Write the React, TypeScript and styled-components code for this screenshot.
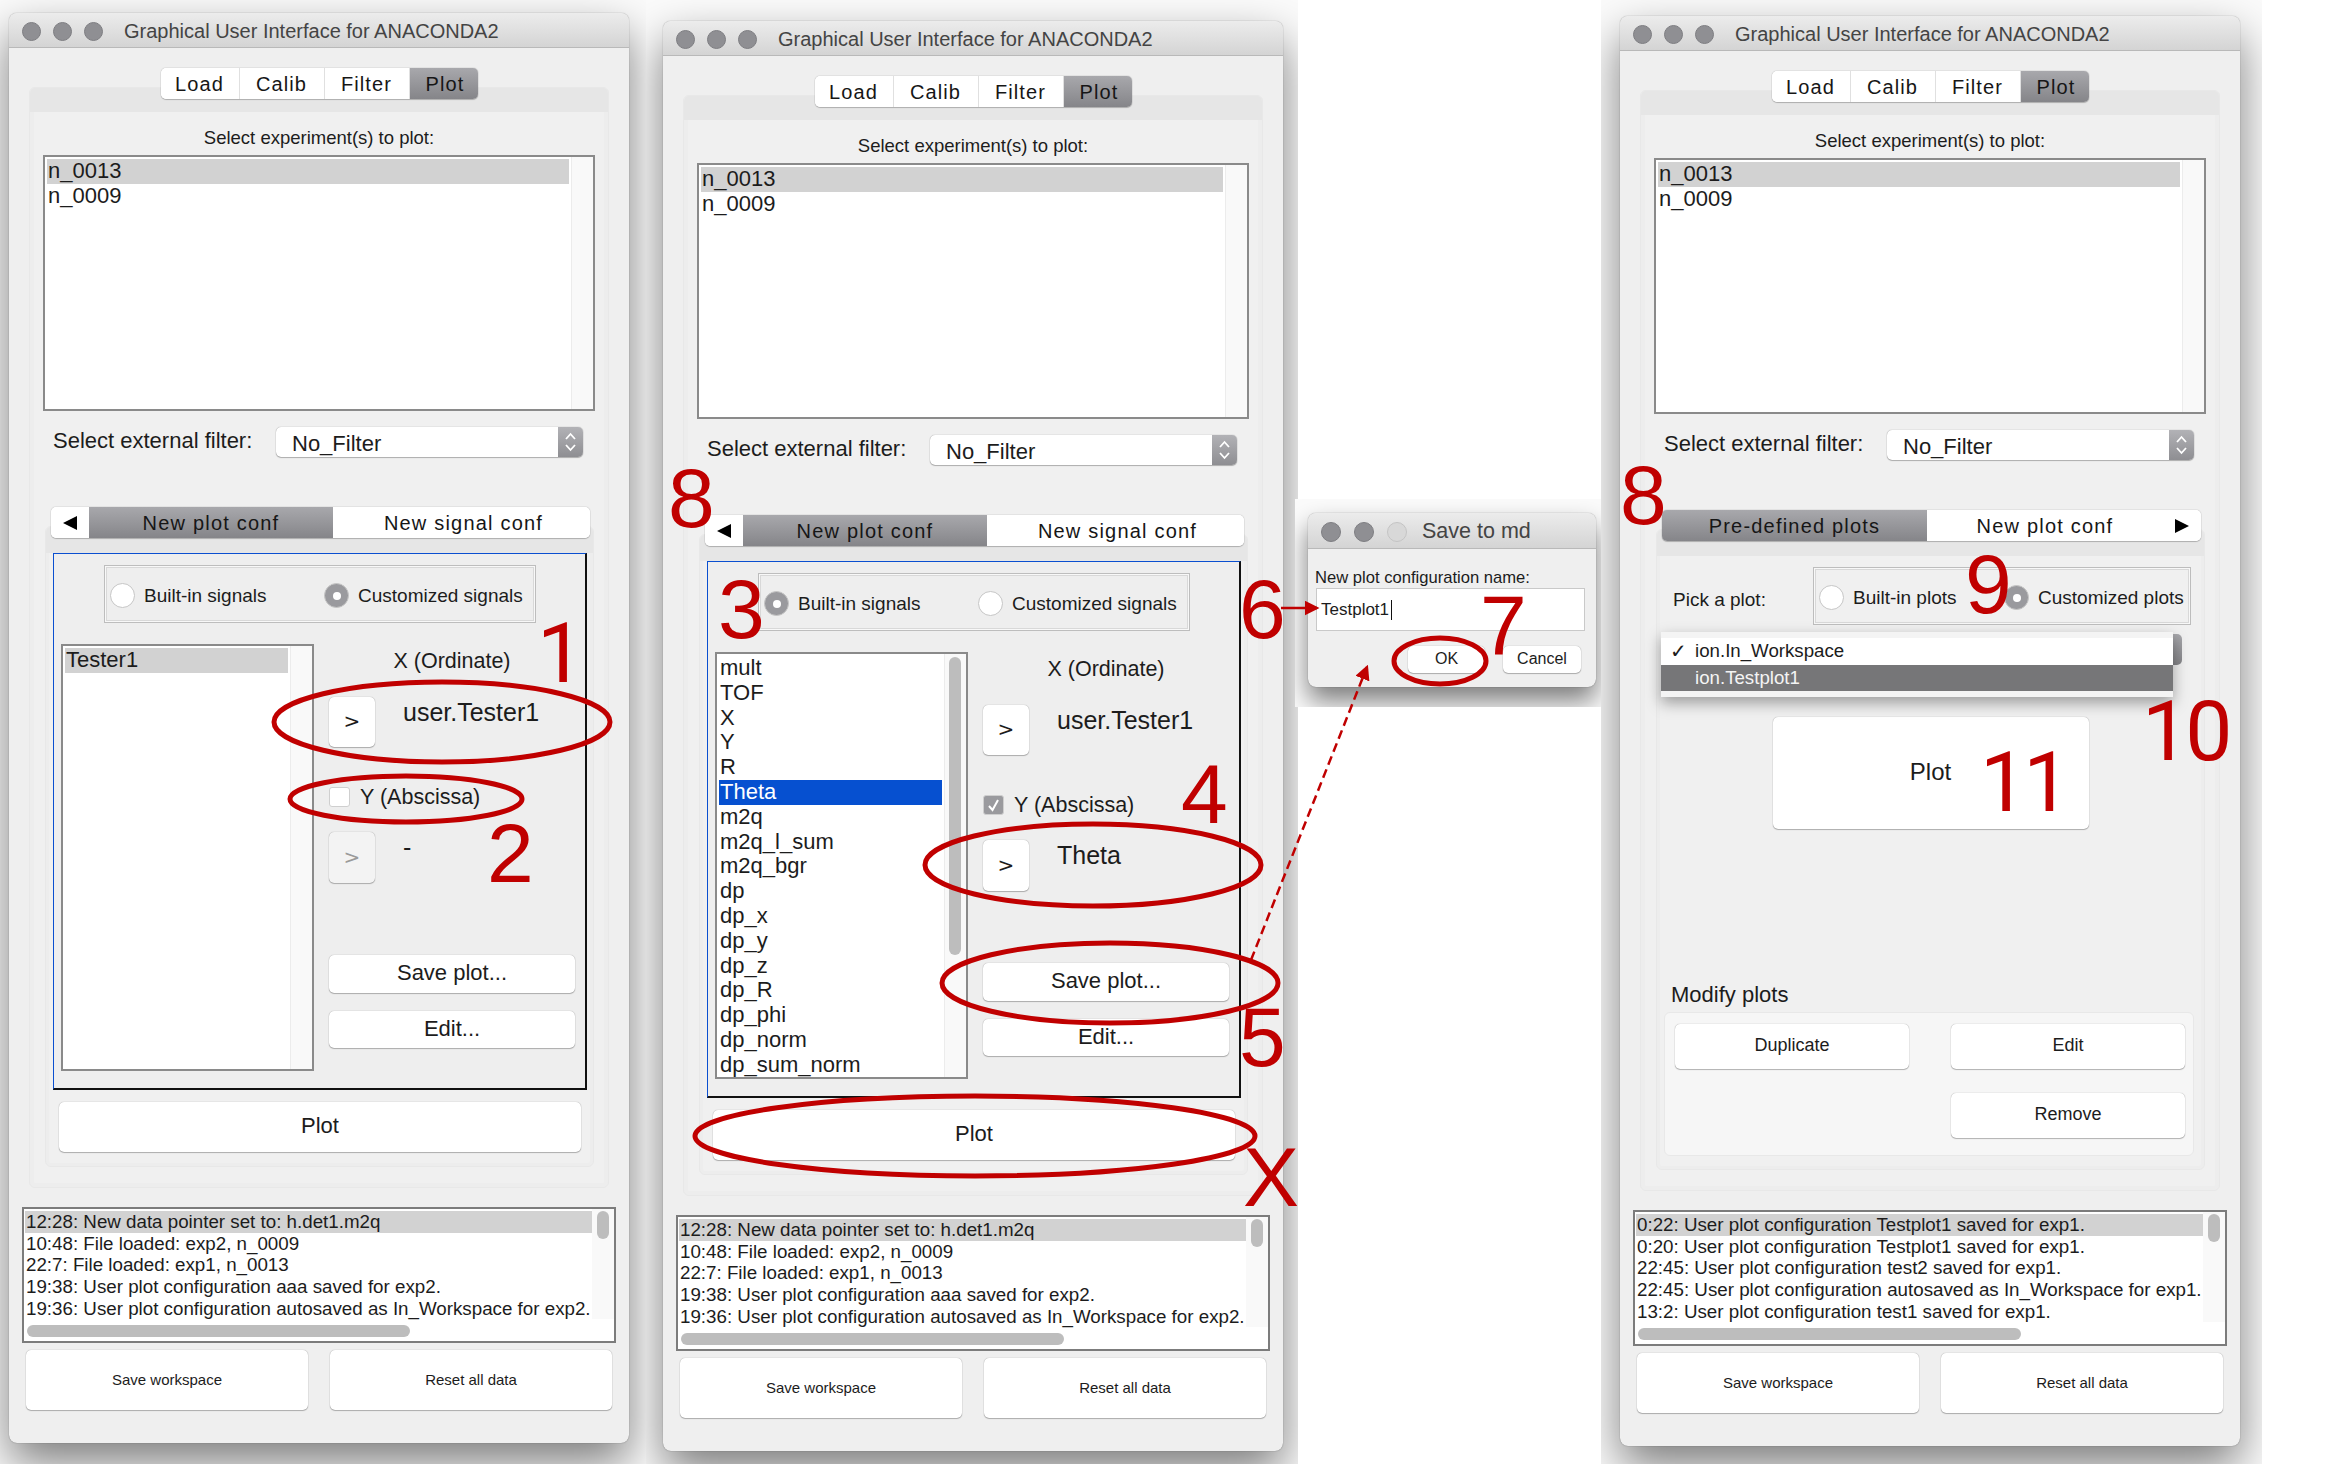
import React, { FC, ReactNode } from "react";
import styled, { createGlobalStyle } from "styled-components";

const GlobalStyle = createGlobalStyle`
  html, body {
    margin: 0;
    background: #fff;
    overflow: hidden;
  }
  body {
    font-family: "Liberation Sans", Arial, sans-serif;
    color: #1c1c1c;
  }
`;

const Canvas = styled.div`
  position: relative;
  width: 2335px;
  height: 1464px;
  overflow: hidden;
  background: #fff;
`;

// every screenshot was pasted in as its own crop, so the shadow stops at a hard edge
const Crop = styled.div<{ $x: number; $y: number; $w: number; $h: number; $z?: number }>`
  position: absolute;
  left: ${(p) => p.$x}px;
  top: ${(p) => p.$y}px;
  width: ${(p) => p.$w}px;
  height: ${(p) => p.$h}px;
  z-index: ${(p) => p.$z || 1};
  overflow: hidden;
  background: #fbfbfb;
`;

const Window = styled.div<{ $x: number; $y: number }>`
  position: absolute;
  left: ${(p) => p.$x}px;
  top: ${(p) => p.$y}px;
  width: 620px;
  height: 1430px;
  display: flex;
  flex-direction: column;
  background: #efefef;
  border-radius: 8px;
  box-shadow: 0 0 1px rgba(0, 0, 0, 0.55), 0 20px 46px rgba(0, 0, 0, 0.5);
`;

const TitleBar = styled.div`
  flex: none;
  height: 35px;
  box-sizing: border-box;
  padding: 2px 0 0 13px;
  display: flex;
  align-items: center;
  border-radius: 8px 8px 0 0;
  border-bottom: 1px solid #b9b9b9;
  background: linear-gradient(#ececec, #d4d4d4);
`;

const Light = styled.span<{ $off?: boolean }>`
  flex: none;
  width: 19px;
  height: 19px;
  margin-right: 12px;
  border-radius: 50%;
  box-sizing: border-box;
  background: ${(p) => (p.$off ? "#d8d8d8" : "#8f8f93")};
  border: 1px solid ${(p) => (p.$off ? "#c4c4c4" : "#7e7e82")};
`;

const TitleText = styled.span`
  margin-left: 9px;
  font-size: 20px;
  color: #444;
  white-space: nowrap;
`;

const MainTabs = styled.div`
  flex: none;
  align-self: center;
  position: relative;
  z-index: 2;
  margin-top: 20px;
  height: 31px;
  display: flex;
  border-radius: 5px;
  box-shadow: 0 0 1px rgba(0, 0, 0, 0.5), 0 1px 1px rgba(0, 0, 0, 0.2);
  background: #fff;
  overflow: hidden;
`;

const MainTab = styled.div<{ $w: number; $active?: boolean }>`
  width: ${(p) => p.$w}px;
  box-sizing: border-box;
  padding: 2px 0 0 ${(p) => (p.$active ? 3 : 0)}px;
  display: flex;
  align-items: center;
  justify-content: center;
  font-size: 20px;
  letter-spacing: 1.1px;
  color: #161616;
  background: ${(p) => (p.$active ? "linear-gradient(#a8a8ac, #858589)" : "#fff")};
  & + & {
    border-left: 1px solid #e0e0e0;
  }
`;

const OuterPanel = styled.div`
  flex: none;
  margin: -12px 20px 0;
  box-sizing: border-box;
  height: 1101px;
  display: flex;
  flex-direction: column;
  background: #f0f0f0;
  border: 1px solid #e8e8e8;
  border-radius: 6px;
  box-shadow: inset 0 0 0 4px #ededed;
`;

const PanelStrip = styled.div<{ $h: number }>`
  flex: none;
  height: ${(p) => p.$h}px;
  background: #e6e6e6;
  border-radius: 5px 5px 0 0;
`;

const ExperimentLabel = styled.div`
  margin-top: 16px;
  height: 20px;
  line-height: 20px;
  font-size: 18.5px;
  text-align: center;
`;

const ListBox = styled.div<{ $w: number; $h: number }>`
  flex: none;
  display: flex;
  width: ${(p) => p.$w}px;
  height: ${(p) => p.$h}px;
  box-sizing: border-box;
  border: 2px solid #8a8a8a;
  background: #fff;
`;

const ExperimentBox = styled(ListBox)`
  margin: 7px 0 0 13px;
`;

const ListRows = styled.div`
  flex: 1;
  padding: 2px;
  min-width: 0;
  font-size: 22px;
`;

const ListRow = styled.div<{ $selected?: "grey" | "blue" }>`
  height: 24.8px;
  line-height: 24.8px;
  padding-left: 1px;
  white-space: nowrap;
  background: ${(p) => (p.$selected === "grey" ? "#d2d2d2" : p.$selected === "blue" ? "#0650d0" : "transparent")};
  color: ${(p) => (p.$selected === "blue" ? "#fff" : "#1c1c1c")};
`;

const ScrollTrack = styled.div`
  flex: none;
  width: 22px;
  box-sizing: border-box;
  padding: 3px 5px 0 4px;
  background: #f9f9f9;
  border-left: 1px solid #ececec;
`;

const ScrollThumb = styled.div<{ $h: number }>`
  height: ${(p) => p.$h}px;
  background: #bdbdbd;
  border-radius: 6px;
`;

const FilterRow = styled.div`
  flex: none;
  margin-top: 16px;
  padding-left: 23px;
  height: 30px;
  display: flex;
  align-items: center;
`;

const FilterLabel = styled.div`
  width: 223px;
  font-size: 22px;
  margin-bottom: 2px;
`;

const Combo = styled.div`
  width: 307px;
  height: 30px;
  display: flex;
  border-radius: 5px;
  background: #fff;
  box-shadow: 0 0 1px rgba(0, 0, 0, 0.45), 0 1px 1px rgba(0, 0, 0, 0.25);
  overflow: hidden;
`;

const ComboValue = styled.div`
  flex: 1;
  padding-left: 16px;
  font-size: 22px;
  line-height: 34px;
`;

const Stepper = styled.div`
  flex: none;
  width: 25px;
  display: flex;
  align-items: center;
  justify-content: center;
  background: linear-gradient(#b2b2b6, #8e8e92);
`;

const InnerTabs = styled.div`
  flex: none;
  position: relative;
  z-index: 2;
  margin: 50px 0 0 21px;
  width: 539px;
  height: 31px;
  display: flex;
  border-radius: 5px;
  background: #fff;
  box-shadow: 0 0 1px rgba(0, 0, 0, 0.5), 0 1px 1px rgba(0, 0, 0, 0.2);
  overflow: hidden;
`;

const InnerTab = styled.div<{ $w: number; $active?: boolean; $pad?: number }>`
  flex: none;
  width: ${(p) => p.$w}px;
  box-sizing: border-box;
  padding: 1px 0 0 ${(p) => p.$pad || 0}px;
  display: flex;
  align-items: center;
  justify-content: center;
  font-size: 20px;
  letter-spacing: 1.2px;
  color: #161616;
  background: ${(p) => (p.$active ? "linear-gradient(#a8a8ac, #858589)" : "#fff")};
`;

const Triangle = styled.span<{ $right?: boolean }>`
  width: 0;
  height: 0;
  border-top: 7.5px solid transparent;
  border-bottom: 7.5px solid transparent;
  ${(p) => (p.$right ? "border-left: 14px solid #000;" : "border-right: 14px solid #000;")}
`;

const InnerPanel = styled.div`
  flex: none;
  position: relative;
  margin: -12px 0 0 15px;
  width: 549px;
  box-sizing: border-box;
  height: 641px;
  display: flex;
  flex-direction: column;
  background: #f0f0f0;
  border: 1px solid #e8e8e8;
  border-radius: 6px;
  box-shadow: inset 0 0 0 3px #ededed;
`;

const SignalFrame = styled.div`
  flex: none;
  margin-left: 7px;
  width: 534px;
  height: 537px;
  box-sizing: border-box;
  background: #eee;
  border-top: 1px solid #0a4fd0;
  border-left: 1px solid #0a4fd0;
  border-right: 2px solid #111;
  border-bottom: 2px solid #111;
  display: flex;
  flex-direction: column;
`;

const RadioGroup = styled.div<{ $ml: number; $w: number; $mt: number }>`
  flex: none;
  margin: ${(p) => p.$mt}px 0 0 ${(p) => p.$ml}px;
  width: ${(p) => p.$w}px;
  height: 58px;
  box-sizing: border-box;
  border: 1px solid #bdbdbd;
  box-shadow: inset 0 0 0 1px #f8f8f8, inset 0 0 0 2px #d8d8d8;
  display: flex;
  align-items: center;
  padding: 3px 0 0 5px;
`;

const RadioOption = styled.div<{ $w: number }>`
  flex: none;
  width: ${(p) => p.$w}px;
  display: flex;
  align-items: center;
  gap: 9px;
  font-size: 19px;
  white-space: nowrap;
`;

const RadioDot = styled.span<{ $on?: boolean }>`
  flex: none;
  width: 25px;
  height: 25px;
  box-sizing: border-box;
  border-radius: 50%;
  display: flex;
  align-items: center;
  justify-content: center;
  background: ${(p) => (p.$on ? "#9a9a9e" : "#fff")};
  border: 1px solid #c6c6c6;
  &::after {
    content: "";
    display: ${(p) => (p.$on ? "block" : "none")};
    width: 8px;
    height: 8px;
    border-radius: 50%;
    background: #fff;
  }
`;

const SignalArea = styled.div`
  flex: 1;
  display: flex;
  gap: 15px;
  margin: 21px 0 0 7px;
`;

const SignalColumn = styled.div`
  flex: none;
  width: 246px;
  display: flex;
  flex-direction: column;
`;

const AxisLabel = styled.div`
  flex: none;
  height: 34px;
  line-height: 34px;
  text-align: center;
  font-size: 21.5px;
`;

const SignalRow = styled.div<{ $mt: number }>`
  flex: none;
  margin-top: ${(p) => p.$mt}px;
  display: flex;
  gap: 28px;
`;

const Button = styled.div<{ $w?: number; $h: number; $size: number }>`
  flex: none;
  width: ${(p) => (p.$w ? `${p.$w}px` : "auto")};
  height: ${(p) => p.$h}px;
  box-sizing: border-box;
  padding-bottom: 2px;
  display: flex;
  align-items: center;
  justify-content: center;
  font-size: ${(p) => p.$size}px;
  background: #fff;
  border-radius: 5px;
  white-space: nowrap;
  box-shadow: 0 0 1px rgba(0, 0, 0, 0.4), 0 1px 1px rgba(0, 0, 0, 0.25);
`;

const PickButton = styled(Button)<{ $disabled?: boolean }>`
  background: ${(p) => (p.$disabled ? "#f3f3f3" : "#fff")};
  color: ${(p) => (p.$disabled ? "#9a9a9a" : "#1c1c1c")};
  font-family: "DejaVu Sans", sans-serif;
`;

const SignalValue = styled.div`
  line-height: 30px;
  font-size: 25px;
`;

const CheckRow = styled.div`
  flex: none;
  margin-top: 40px;
  height: 20px;
  display: flex;
  align-items: center;
  gap: 10px;
  font-size: 21.5px;
`;

const CheckBox = styled.span<{ $on?: boolean }>`
  flex: none;
  width: 21px;
  height: 20px;
  box-sizing: border-box;
  border-radius: 3px;
  display: flex;
  align-items: center;
  justify-content: center;
  background: ${(p) => (p.$on ? "#9a9a9e" : "#fff")};
  border: 1px solid #cfcfcf;
`;

const SaveButton = styled(Button)`
  margin-top: 72px;
`;

const EditButton = styled(Button)`
  margin-top: 18px;
`;

const PlotButton = styled(Button)`
  margin: 12px 0 0 13px;
`;

const LogBox = styled.div`
  flex: none;
  margin: 19px 0 0 13px;
  width: 594px;
  height: 136px;
  box-sizing: border-box;
  border: 2px solid #7c7c7c;
  background: #fff;
  display: flex;
  flex-direction: column;
`;

const LogTop = styled.div`
  flex: none;
  height: 110px;
  display: flex;
`;

const LogRows = styled.div`
  flex: 1;
  min-width: 0;
  padding: 2px 0 0 1px;
  font-size: 18.75px;
`;

const LogRow = styled.div<{ $selected?: boolean }>`
  height: 21.7px;
  line-height: 21.7px;
  padding-left: 1px;
  white-space: nowrap;
  background: ${(p) => (p.$selected ? "#d2d2d2" : "transparent")};
`;

const LogTrack = styled.div`
  flex: none;
  width: 22px;
  box-sizing: border-box;
  padding: 2px 5px 0 5px;
  background: #f9f9f9;
`;

const LogBottom = styled.div`
  flex: 1;
  box-sizing: border-box;
  padding: 6px 0 0 3px;
`;

const LogHThumb = styled.div`
  width: 383px;
  height: 12px;
  border-radius: 6px;
  background: #bdbdbd;
`;

const FooterRow = styled.div`
  flex: none;
  margin: 7px 0 0 17px;
  display: flex;
  gap: 22px;
`;

// plots panel of the third window
const PickRow = styled.div`
  flex: none;
  display: flex;
  align-items: center;
  padding-left: 16px;
`;

const PickLabel = styled.div`
  width: 140px;
  margin-top: 18px;
  font-size: 19px;
`;

const PlotSelect = styled.div`
  flex: none;
  position: relative;
  margin: 9px 0 0 25px;
  width: 500px;
  height: 31px;
  border-radius: 5px;
  background: linear-gradient(#a8a8ac, #858589);
`;

const Menu = styled.div`
  position: absolute;
  left: -21px;
  top: -2px;
  width: 512px;
  height: 65px;
  box-sizing: border-box;
  padding: 6px 0;
  background: #f4f4f4;
  box-shadow: 0 6px 14px rgba(0, 0, 0, 0.35);
  font-size: 18.7px;
`;

const MenuItem = styled.div<{ $active?: boolean }>`
  position: relative;
  height: 26.5px;
  line-height: 26.5px;
  padding-left: 34px;
  background: ${(p) => (p.$active ? "#767678" : "#fff")};
  color: ${(p) => (p.$active ? "#f4f4f4" : "#1c1c1c")};
`;

const MenuCheck = styled.span`
  position: absolute;
  left: 9px;
  top: 0;
  font-family: "DejaVu Sans", sans-serif;
  font-size: 20px;
`;

const BigPlot = styled(Button)`
  align-self: center;
  margin-top: 52px;
`;

const ModifyLabel = styled.div`
  flex: none;
  margin: 153px 0 0 14px;
  height: 26px;
  line-height: 26px;
  font-size: 22px;
`;

const ModifyBox = styled.div`
  flex: none;
  margin: 4px 0 0 7px;
  width: 530px;
  height: 144px;
  box-sizing: border-box;
  padding: 11px 10px;
  display: grid;
  grid-template-columns: 234px 234px;
  grid-auto-rows: 45px;
  gap: 24px 42px;
  background: #f6f6f6;
  border: 1px solid #e8e8e8;
  border-radius: 6px;
`;

// save dialog
const Dialog = styled.div`
  position: absolute;
  left: 13px;
  top: 14px;
  width: 288px;
  height: 174px;
  display: flex;
  flex-direction: column;
  background: #efefef;
  border-radius: 8px;
  box-shadow: 0 0 1px rgba(0, 0, 0, 0.55), 0 14px 26px rgba(0, 0, 0, 0.5);
`;

const DialogTitleBar = styled(TitleBar)`
  height: 36px;
  ${Light} {
    width: 20px;
    height: 20px;
    margin-right: 13px;
  }
`;

const DialogTitle = styled(TitleText)`
  margin-left: 2px;
  font-size: 21.5px;
`;

const DialogLabel = styled.div`
  margin: 21px 0 0 7px;
  height: 16px;
  line-height: 16px;
  font-size: 16.6px;
  white-space: nowrap;
`;

const DialogInput = styled.div`
  margin: 2px 0 0 8px;
  width: 269px;
  height: 43px;
  box-sizing: border-box;
  border: 1px solid #c9c9c9;
  background: #fff;
  padding-left: 4px;
  display: flex;
  align-items: center;
  font-size: 17px;
`;

const Caret = styled.span`
  display: inline-block;
  width: 1px;
  height: 20px;
  margin-left: 2px;
  background: #111;
`;

const DialogButtons = styled.div`
  margin: 15px 0 0 100px;
  display: flex;
  gap: 18px;
`;

// red notes drawn over the screenshots
const Overlay = styled.svg`
  position: absolute;
  left: 0;
  top: 0;
  z-index: 5;
  pointer-events: none;
`;

const Note = styled.span<{ $x: number; $y: number; $plainOne?: boolean }>`
  position: absolute;
  left: ${(p) => p.$x}px;
  top: ${(p) => p.$y}px;
  z-index: 6;
  font-family: ${(p) => (p.$plainOne ? "Roboto, sans-serif" : "\"Liberation Sans\", sans-serif")};
  font-size: 84px;
  line-height: 1;
  letter-spacing: ${(p) => (p.$plainOne ? "-4px" : "0")};
  color: #c00000;
`;

const Chevrons: FC = () => (
  <svg width="15" height="24" viewBox="0 0 15 24" fill="none" stroke="#fff" strokeWidth="1.8">
    <path d="M3 9 L7.5 4 L12 9" />
    <path d="M3 15 L7.5 20 L12 15" />
  </svg>
);

const Tick: FC = () => (
  <svg width="15" height="15" viewBox="0 0 15 15" fill="none" stroke="#fff" strokeWidth="2">
    <path d="M3 8 L6.5 12 L12 2" />
  </svg>
);

const Lights: FC<{ dim?: boolean }> = ({ dim }) => (
  <>
    <Light />
    <Light />
    <Light $off={dim} />
  </>
);

interface AppWindowProps {
  x: number;
  y: number;
  innerTabs: ReactNode;
  logLines: string[];
  children: ReactNode;
}

const AppWindow: FC<AppWindowProps> = ({ x, y, innerTabs, logLines, children }) => (
  <Window $x={x} $y={y}>
    <TitleBar>
      <Lights />
      <TitleText>Graphical User Interface for ANACONDA2</TitleText>
    </TitleBar>
    <MainTabs>
      <MainTab $w={78}>Load</MainTab>
      <MainTab $w={85}>Calib</MainTab>
      <MainTab $w={85}>Filter</MainTab>
      <MainTab $w={69} $active>Plot</MainTab>
    </MainTabs>
    <OuterPanel>
      <PanelStrip $h={24} />
      <ExperimentLabel>Select experiment(s) to plot:</ExperimentLabel>
      <ExperimentBox $w={552} $h={256}>
        <ListRows>
          <ListRow $selected="grey">n_0013</ListRow>
          <ListRow>n_0009</ListRow>
        </ListRows>
        <ScrollTrack />
      </ExperimentBox>
      <FilterRow>
        <FilterLabel>Select external filter:</FilterLabel>
        <Combo>
          <ComboValue>No_Filter</ComboValue>
          <Stepper><Chevrons /></Stepper>
        </Combo>
      </FilterRow>
      {innerTabs}
      {children}
    </OuterPanel>
    <LogBox>
      <LogTop>
        <LogRows>
          {logLines.map((line, i) => (
            <LogRow key={i} $selected={i === 0}>{line}</LogRow>
          ))}
        </LogRows>
        <LogTrack><ScrollThumb $h={28} /></LogTrack>
      </LogTop>
      <LogBottom><LogHThumb /></LogBottom>
    </LogBox>
    <FooterRow>
      <Button $w={282} $h={60} $size={15}>Save workspace</Button>
      <Button $w={282} $h={60} $size={15}>Reset all data</Button>
    </FooterRow>
  </Window>
);

const ConfTabs: FC = () => (
  <InnerTabs>
    <InnerTab $w={38}><Triangle /></InnerTab>
    <InnerTab $w={244} $active>New plot conf</InnerTab>
    <InnerTab $w={257} $pad={4}>New signal conf</InnerTab>
  </InnerTabs>
);

interface SignalPanelProps {
  builtIn?: boolean;
  signals: string[];
  selected: number;
  scrollThumb?: number;
  yChecked?: boolean;
  yValue: string;
}

const SignalPanel: FC<SignalPanelProps> = ({ builtIn, signals, selected, scrollThumb, yChecked, yValue }) => (
  <InnerPanel>
    <PanelStrip $h={26} />
    <SignalFrame>
      <RadioGroup $ml={50} $w={432} $mt={11}>
        <RadioOption $w={214}><RadioDot $on={builtIn} />Built-in signals</RadioOption>
        <RadioOption $w={200}><RadioDot $on={!builtIn} />Customized signals</RadioOption>
      </RadioGroup>
      <SignalArea>
        <ListBox $w={253} $h={427}>
          <ListRows>
            {signals.map((name, i) => (
              <ListRow key={name} $selected={i === selected ? (builtIn ? "blue" : "grey") : undefined}>{name}</ListRow>
            ))}
          </ListRows>
          <ScrollTrack>{scrollThumb ? <ScrollThumb $h={scrollThumb} /> : null}</ScrollTrack>
        </ListBox>
        <SignalColumn>
          <AxisLabel>X (Ordinate)</AxisLabel>
          <SignalRow $mt={19}>
            <PickButton $w={46} $h={50} $size={20}>&gt;</PickButton>
            <SignalValue>user.Tester1</SignalValue>
          </SignalRow>
          <CheckRow>
            <CheckBox $on={yChecked}>{yChecked && <Tick />}</CheckBox>
            Y (Abscissa)
          </CheckRow>
          <SignalRow $mt={25}>
            <PickButton $w={46} $h={51} $size={20} $disabled={!yChecked}>&gt;</PickButton>
            <SignalValue>{yValue}</SignalValue>
          </SignalRow>
          <SaveButton $h={38} $size={22}>Save plot...</SaveButton>
          <EditButton $h={37} $size={22}>Edit...</EditButton>
        </SignalColumn>
      </SignalArea>
    </SignalFrame>
    <PlotButton $w={522} $h={50} $size={22}>Plot</PlotButton>
  </InnerPanel>
);

const oldLog = [
  "12:28: New data pointer set to: h.det1.m2q",
  "10:48: File loaded: exp2, n_0009",
  "22:7: File loaded: exp1, n_0013",
  "19:38: User plot configuration aaa saved for exp2.",
  "19:36: User plot configuration autosaved as In_Workspace for exp2.",
];

const newLog = [
  "0:22: User plot configuration Testplot1 saved for exp1.",
  "0:20: User plot configuration Testplot1 saved for exp1.",
  "22:45: User plot configuration test2 saved for exp1.",
  "22:45: User plot configuration autosaved as In_Workspace for exp1.",
  "13:2: User plot configuration test1 saved for exp1.",
];

const builtInSignals = [
  "mult", "TOF", "X", "Y", "R", "Theta", "m2q", "m2q_l_sum", "m2q_bgr", "dp",
  "dp_x", "dp_y", "dp_z", "dp_R", "dp_phi", "dp_norm", "dp_sum_norm",
];

const ellipses = [
  { cx: 442, cy: 722, rx: 168, ry: 40 },
  { cx: 406, cy: 799, rx: 116, ry: 23 },
  { cx: 1093, cy: 865, rx: 168, ry: 41 },
  { cx: 1110, cy: 983, rx: 168, ry: 40 },
  { cx: 975, cy: 1136, rx: 280, ry: 40 },
  { cx: 1440, cy: 661, rx: 46, ry: 23 },
];

const notes = [
  { label: "1", x: 537, y: 612, plainOne: true },
  { label: "2", x: 487, y: 811 },
  { label: "8", x: 668, y: 456 },
  { label: "3", x: 718, y: 567 },
  { label: "6", x: 1239, y: 567 },
  { label: "7", x: 1480, y: 583 },
  { label: "4", x: 1181, y: 752 },
  { label: "5", x: 1239, y: 995 },
  { label: "X", x: 1243, y: 1135 },
  { label: "8", x: 1620, y: 453 },
  { label: "9", x: 1965, y: 542 },
  { label: "10", x: 2142, y: 690, plainOne: true },
  { label: "11", x: 1980, y: 741, plainOne: true },
];

const App: FC = () => (
  <Canvas>
    <GlobalStyle />

    <Crop $x={0} $y={0} $w={646} $h={1464}>
      <AppWindow
        x={9}
        y={13}
        logLines={oldLog}
        innerTabs={<ConfTabs />}
      >
        <SignalPanel signals={["Tester1"]} selected={0} yValue="-" />
      </AppWindow>
    </Crop>

    <Crop $x={646} $y={0} $w={652} $h={1464}>
      <AppWindow
        x={17}
        y={21}
        logLines={oldLog}
        innerTabs={<ConfTabs />}
      >
        <SignalPanel builtIn signals={builtInSignals} selected={5} scrollThumb={298} yChecked yValue="Theta" />
      </AppWindow>
    </Crop>

    <Crop $x={1601} $y={0} $w={661} $h={1464}>
      <AppWindow
        x={19}
        y={16}
        logLines={newLog}
        innerTabs={
          <InnerTabs>
            <InnerTab $w={265} $active>Pre-defined plots</InnerTab>
            <InnerTab $w={236}>New plot conf</InnerTab>
            <InnerTab $w={38}><Triangle $right /></InnerTab>
          </InnerTabs>
        }
      >
        <InnerPanel>
          <PanelStrip $h={26} />
          <PickRow>
            <PickLabel>Pick a plot:</PickLabel>
            <RadioGroup $ml={0} $w={378} $mt={11}>
              <RadioOption $w={185}><RadioDot />Built-in plots</RadioOption>
              <RadioOption $w={180}><RadioDot $on />Customized plots</RadioOption>
            </RadioGroup>
          </PickRow>
          <PlotSelect>
            <Menu>
              <MenuItem>
                <MenuCheck>✓</MenuCheck>
                ion.In_Workspace
              </MenuItem>
              <MenuItem $active>ion.Testplot1</MenuItem>
            </Menu>
          </PlotSelect>
          <BigPlot $w={316} $h={112} $size={24}>Plot</BigPlot>
          <ModifyLabel>Modify plots</ModifyLabel>
          <ModifyBox>
            <Button $h={45} $size={18}>Duplicate</Button>
            <Button $h={45} $size={18}>Edit</Button>
            <span />
            <Button $h={45} $size={18}>Remove</Button>
          </ModifyBox>
        </InnerPanel>
      </AppWindow>
    </Crop>

    <Crop $x={1295} $y={499} $w={306} $h={208} $z={2}>
      <Dialog>
        <DialogTitleBar>
          <Lights dim />
          <DialogTitle>Save to md</DialogTitle>
        </DialogTitleBar>
        <DialogLabel>New plot configuration name:</DialogLabel>
        <DialogInput>Testplot1<Caret /></DialogInput>
        <DialogButtons>
          <Button $w={77} $h={27} $size={16}>OK</Button>
          <Button $w={78} $h={27} $size={16}>Cancel</Button>
        </DialogButtons>
      </Dialog>
    </Crop>

    <Overlay width="2335" height="1464" viewBox="0 0 2335 1464">
      <defs>
        <marker id="head" markerWidth="6" markerHeight="6" refX="5" refY="3" orient="auto">
          <path d="M0 0 L6 3 L0 6 Z" fill="#c00000" />
        </marker>
      </defs>
      {ellipses.map((e, i) => (
        <ellipse key={i} {...e} fill="none" stroke="#c00000" strokeWidth="5" />
      ))}
      <path d="M1281 608 L1317 608" stroke="#c00000" strokeWidth="2.5" markerEnd="url(#head)" />
      <path d="M1251 960 L1367 667" stroke="#c00000" strokeWidth="2.5" strokeDasharray="9 5" markerEnd="url(#head)" />
    </Overlay>

    {notes.map((n, i) => (
      <Note key={i} $x={n.x} $y={n.y} $plainOne={n.plainOne}>{n.label}</Note>
    ))}
  </Canvas>
);

export default App;
